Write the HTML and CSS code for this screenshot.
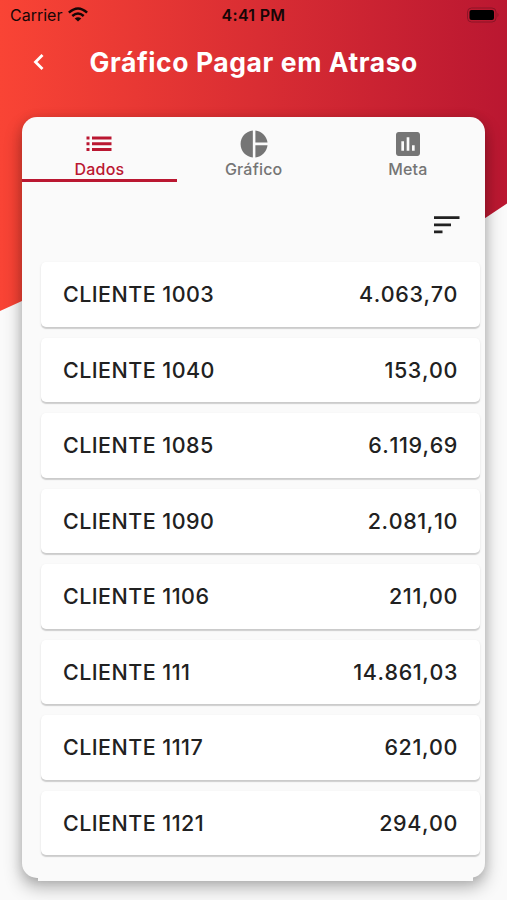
FILE: index.html
```html
<!DOCTYPE html>
<html lang="pt-BR">
<head>
    <meta charset="UTF-8">
    <meta name="viewport" content="width=device-width, initial-scale=1.0">
    <title>Gráfico Pagar em Atraso</title>
    <link rel="stylesheet" href="styles.css">
</head>
<body>
    <svg class="backdrop" width="507" height="320" viewBox="0 0 507 320" aria-hidden="true">
        <defs>
            <linearGradient id="red" x1="0" y1="0" x2="1" y2="0">
                <stop offset="0" stop-color="#f94435"/>
                <stop offset="1" stop-color="#ba1731"/>
            </linearGradient>
        </defs>
        <path fill="url(#red)" d="M0 0H507V203.500L486 217.500C360 300 160 238 22 301L0 311Z"/>
    </svg>
    <div class="status-bar">
        <div class="carrier">
            <span>Carrier</span>
            <svg width="20" height="15" viewBox="0 0 20 15" fill="none" stroke="#160606" stroke-width="2.500">
                <path d="M.9 5.700Q10-2.700 19.100 5.700M4.300 9Q10 4 15.700 9"/>
                <path d="M10 14.600L6.700 11.500Q10 8.800 13.300 11.500Z" fill="#160606" stroke="none"/>
            </svg>
        </div>
        <span class="time">4:41 PM</span>
        <svg class="battery" width="34" height="16" viewBox="0 0 34 16">
            <rect x="2.500" y="1" width="28.500" height="14" rx="4" fill="none" stroke="#8c1426" stroke-width="1"/>
            <rect x="4.500" y="3" width="24.500" height="10" rx="2" fill="#000"/>
            <path d="M32.500 5.800Q34.500 8 32.500 10.200Z" fill="#8c1426"/>
        </svg>
    </div>
    <header>
        <button class="back" aria-label="Voltar">
            <svg width="12" height="18" viewBox="0 0 12 18" fill="none" stroke="#fff" stroke-width="2.800">
                <path d="M10.500 2L3.500 9L10.500 16"/>
            </svg>
        </button>
        <h1>Gráfico Pagar em Atraso</h1>
    </header>
    <main class="panel">
        <nav class="tabs">
            <a class="tab active">
                <svg width="26" height="26" viewBox="0 0 26 26" fill="currentColor">
                    <path d="M.5 5.500h3v3h-3zM.5 11.300h3v3h-3zM.5 17.100h3v3h-3zM6 5.500h19.500v3H6zM6 11.300h19.500v3H6zM6 17.100h19.500v3H6z"/>
                </svg>
                <span>Dados</span>
            </a>
            <a class="tab">
                <svg width="28" height="28" viewBox="0 0 24 24" fill="currentColor">
                    <path d="M11 .4v23.200C5.100 23 .5 18.100.5 12S5.100 1 11 .4zM13.200.4v10.400h10.400C23 5.300 18.700 1 13.200.4zM13.200 13.100v10.500C18.700 23 23 18.700 23.600 13.100z"/>
                </svg>
                <span>Gráfico</span>
            </a>
            <a class="tab">
                <svg width="32" height="32" viewBox="0 0 24 24" fill="currentColor">
                    <path d="M19 3H5c-1.100 0-2 .9-2 2v14c0 1.100.9 2 2 2h14c1.100 0 2-.9 2-2V5c0-1.100-.9-2-2-2zM9 17H7v-7h2v7zm4 0h-2V7h2v10zm4 0h-2v-4h2v4z"/>
                </svg>
                <span>Meta</span>
            </a>
        </nav>
        <div class="toolbar">
            <button class="sort" aria-label="Ordenar">
                <svg width="26" height="18" viewBox="0 0 26 18" fill="#212121">
                    <path d="M0 .3h25.500v2.800H0zM0 7.400h17v2.800H0zM0 14.500h8.500v2.800H0z"/>
                </svg>
            </button>
        </div>
        <ul class="list">
            <li><span>CLIENTE 1003</span><span class="value">4.063,70</span></li>
            <li><span>CLIENTE 1040</span><span class="value">153,00</span></li>
            <li><span>CLIENTE 1085</span><span class="value">6.119,69</span></li>
            <li><span>CLIENTE 1090</span><span class="value">2.081,10</span></li>
            <li><span>CLIENTE 1106</span><span class="value">211,00</span></li>
            <li><span>CLIENTE 111</span><span class="value">14.861,03</span></li>
            <li><span>CLIENTE 1117</span><span class="value">621,00</span></li>
            <li><span>CLIENTE 1121</span><span class="value">294,00</span></li>
        </ul>
    </main>
</body>
</html>
```
FILE: styles.css
```css
* {
    box-sizing: border-box;
}
body {
    margin: 0;
    height: 900px;
    overflow: hidden;
    position: relative;
    background: #fafafa;
    color: #212121;
    font-family: Inter, sans-serif;
}
button {
    padding: 0;
    border: 0;
    background: none;
}
svg {
    display: block;
}
.backdrop {
    position: absolute;
    top: 0;
    left: 0;
    z-index: -1;
}
.status-bar {
    display: grid;
    grid-template-columns: 1fr auto 1fr;
    align-items: center;
    height: 29px;
    padding: 0 8px 0 10px;
    color: #160606;
    font-size: 16px;
}
.carrier {
    display: flex;
    align-items: center;
    gap: 6px;
}
.time {
    margin-left: -2px;
    font-weight: 600;
    letter-spacing: 0.3px;
}
.battery {
    justify-self: end;
}
header {
    display: flex;
    align-items: center;
    height: 65px;
    padding-left: 32px;
}
h1 {
    margin: 0 0 0 45.5px;
    color: #fff;
    font-size: 26.5px;
    font-weight: 700;
    letter-spacing: 0.58px;
    white-space: nowrap;
}
.panel {
    position: relative;
    height: 761px;
    margin: 23px 22px 0 22.4px;
    border-radius: 15px;
    background: #fafafa;
    box-shadow: 0 9px 18px rgba(0, 0, 0, 0.3), 0 2px 12px rgba(0, 0, 0, 0.12);
}
/* clipped top edge of the next row in the list */
.panel::after {
    content: "";
    position: absolute;
    left: 16px;
    right: 12px;
    bottom: -3px;
    height: 5px;
    background: #fafafa;
}
.tabs {
    display: flex;
    height: 65px;
}
.tab {
    flex: 1;
    display: flex;
    flex-direction: column;
    align-items: center;
    color: #757575;
    font-size: 16px;
    font-weight: 500;
    line-height: 20px;
    letter-spacing: 0.2px;
}
.tab svg {
    height: 32px;
    margin: 11px 0 -1px;
}
.active {
    color: #ba1731;
    border-bottom: 3px solid #ba1731;
}
.toolbar {
    display: flex;
    justify-content: flex-end;
    height: 80px;
    padding: 34px 25.5px 0 0;
}
.sort {
    height: 18px;
}
.list {
    display: flex;
    flex-direction: column;
    gap: 11px;
    margin: 0;
    padding: 0 5px 0 18.6px;
    list-style: none;
}
.list li {
    display: flex;
    align-items: center;
    justify-content: space-between;
    height: 64.5px;
    padding: 0 22px;
    border-radius: 5px;
    background: #fff;
    box-shadow: 0 1.5px 1px rgba(0, 0, 0, 0.15), 0 1px 3px rgba(0, 0, 0, 0.07);
    font-size: 21.5px;
    font-weight: 500;
    letter-spacing: 0.45px;
    font-kerning: none;
}
.list .value {
    letter-spacing: 0.6px;
}
```
